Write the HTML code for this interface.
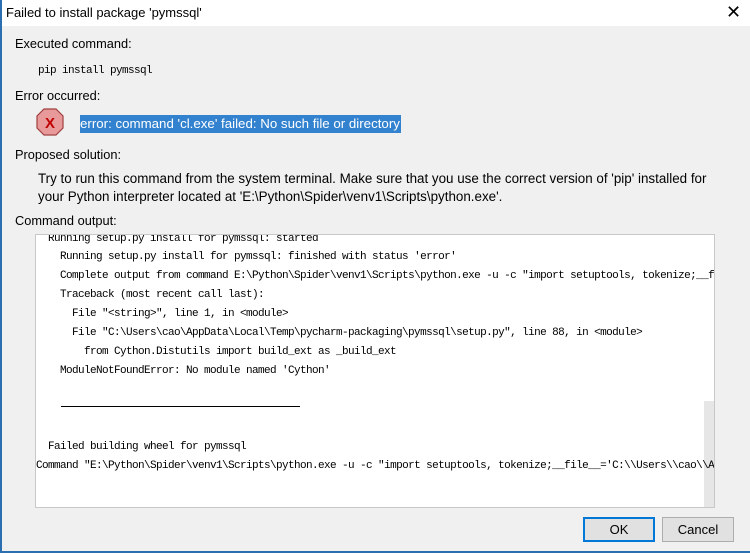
<!DOCTYPE html>
<html><head><style>
body{margin:0;width:750px;height:553px;overflow:hidden;background:#f0f0f0;font-family:"Liberation Sans",sans-serif;font-size:12.8px;color:#000;position:relative}
.t{position:absolute;white-space:nowrap}
.m{position:absolute;white-space:nowrap;font-family:"Liberation Mono","Noto Serif CJK SC",monospace;font-size:11px;letter-spacing:-0.6px}
</style></head><body>
<div style="position:absolute;left:0;top:0;width:750px;height:26px;background:#fff"></div>
<div style="position:absolute;left:0;top:0;width:2px;height:553px;background:#2b6fb0"></div>
<div style="position:absolute;left:0;top:551px;width:750px;height:2px;background:#2b6fb0"></div>
<div class="t" style="left:6px;top:5px;font-size:13px">Failed to install package 'pymssql'</div>
<div class="t" style="left:726px;top:2px;font-size:18px;font-weight:300">✕</div>
<div class="t" style="left:15px;top:36px">Executed command:</div>
<div class="m" style="left:38px;top:65px">pip install pymssql</div>
<div class="t" style="left:15px;top:88px">Error occurred:</div>
<svg style="position:absolute;left:36px;top:108px" width="28" height="28"><polygon points="8,1 20,1 27,8 27,20 20,27 8,27 1,20 1,8" fill="#e89a9a" stroke="#a04040" stroke-width="1.2"/><text x="14" y="20" text-anchor="middle" font-family="Liberation Sans" font-weight="bold" font-size="15" fill="#c00000">X</text></svg>
<div class="t" style="left:80px;top:115px;background:#3382cf;color:#fff;padding:1px 1px 2px 0;font-size:13.3px">error: command 'cl.exe' failed: No such file or directory</div>
<div class="t" style="left:15px;top:147px">Proposed solution:</div>
<div class="t" style="left:38px;top:171px;font-size:13.4px">Try to run this command from the system terminal. Make sure that you use the correct version of 'pip' installed for</div>
<div class="t" style="left:38px;top:189px;font-size:13.4px">your Python interpreter located at 'E:\Python\Spider\venv1\Scripts\python.exe'.</div>
<div class="t" style="left:15px;top:213px">Command output:</div>
<div style="position:absolute;left:35px;top:234px;width:680px;height:274px;background:#fff;border:1px solid #c8c8c8;box-sizing:border-box;overflow:hidden">
<div style="position:absolute;left:668px;top:166px;width:12px;height:108px;background:#e6e6e6"></div>
<div class="m" style="left:12px;top:-2px">Running setup.py install for pymssql: started</div>
<div class="m" style="left:24px;top:16px">Running setup.py install for pymssql: finished with status 'error'</div>
<div class="m" style="left:24px;top:35px">Complete output from command E:\Python\Spider\venv1\Scripts\python.exe -u -c "import setuptools, tokenize;__f</div>
<div class="m" style="left:24px;top:54px">Traceback (most recent call last):</div>
<div class="m" style="left:36px;top:73px">File "&lt;string&gt;", line 1, in &lt;module&gt;</div>
<div class="m" style="left:36px;top:92px">File "C:\Users\cao\AppData\Local\Temp\pycharm-packaging\pymssql\setup.py", line 88, in &lt;module&gt;</div>
<div class="m" style="left:48px;top:111px">from Cython.Distutils import build_ext as _build_ext</div>
<div class="m" style="left:24px;top:130px">ModuleNotFoundError: No module named 'Cython'</div>
<div style="position:absolute;left:25px;top:171px;width:239px;height:1px;background:#000"></div>
<div class="m" style="left:12px;top:206px">Failed building wheel for pymssql</div>
<div class="m" style="left:0px;top:225px">Command "E:\Python\Spider\venv1\Scripts\python.exe -u -c "import setuptools, tokenize;__file__='C:\\Users\\cao\\A</div>
</div>
<div style="position:absolute;left:583px;top:517px;width:72px;height:25px;background:#e1e1e1;border:2px solid #0078d7;box-sizing:border-box;text-align:center;line-height:21px;font-size:13px">OK</div>
<div style="position:absolute;left:662px;top:517px;width:72px;height:25px;background:#e1e1e1;border:1px solid #adadad;box-sizing:border-box;text-align:center;line-height:23px;font-size:13px">Cancel</div>
</body></html>
